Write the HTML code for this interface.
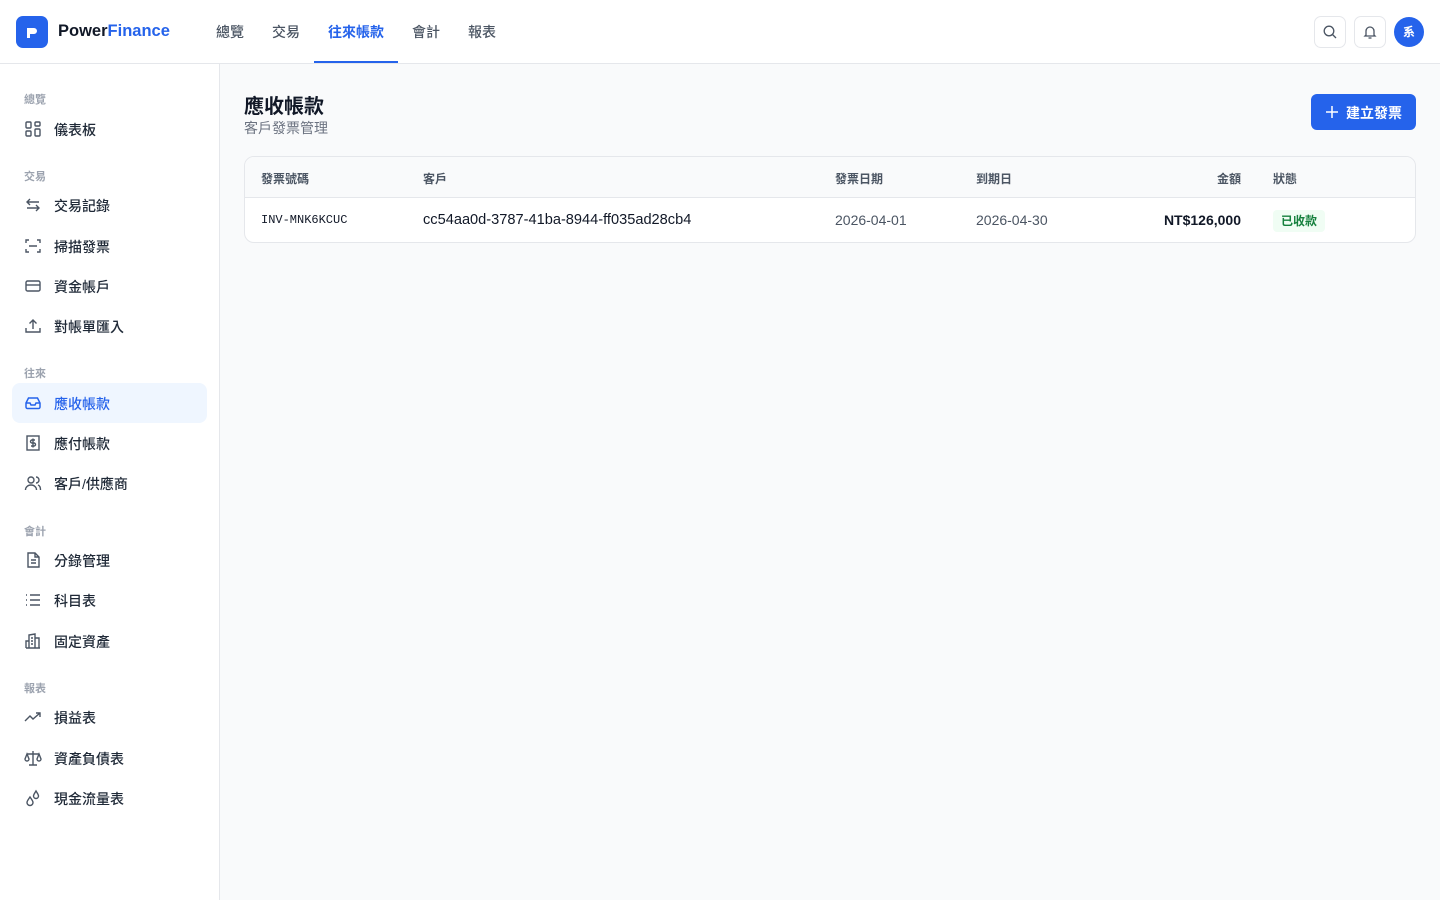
<!DOCTYPE html>
<html><head><meta charset="utf-8"><style>
*{box-sizing:border-box;margin:0;padding:0}
body{width:1440px;height:900px;overflow:hidden;background:#f9fafb;font-family:"Liberation Sans","Noto Sans CJK TC",sans-serif;color:#111827}
.hdr{position:absolute;left:0;top:0;width:1440px;height:64px;background:#fff;border-bottom:1px solid #e5e7eb}
.logo{position:absolute;left:16px;top:16px;width:32px;height:32px;background:#2563eb;border-radius:7px}
.brand{position:absolute;left:58px;top:22px;font-size:16.5px;font-weight:700;color:#111827}
.brand span{color:#2563eb}
.tab{position:absolute;top:22px;font-size:14px;color:#4b5563;font-weight:500}
.tab.act{color:#2563eb;font-weight:700}
.uline{position:absolute;left:314px;top:61px;width:84px;height:2px;background:#2563eb}
.ib{position:absolute;top:16px;width:32px;height:32px;border:1px solid #e5e7eb;border-radius:7px;background:#fff}
.ib svg{position:absolute;left:7px;top:7px}
.av{position:absolute;left:1394px;top:17px;width:30px;height:30px;border-radius:50%;background:#2563eb;color:#fff;font-size:12px;font-weight:700;text-align:center;line-height:30px}
.side{position:absolute;left:0;top:64px;width:220px;height:836px;background:#fff;border-right:1px solid #e5e7eb}
.lab{position:absolute;left:24px;font-size:11px;font-weight:700;color:#9ca3af}
.it{position:absolute;left:12px;width:195px;height:40px;border-radius:8px;font-size:14px;font-weight:500;color:#1f2937}
.it span{position:absolute;left:42px;top:50%;transform:translateY(-45%)}
.it svg{position:absolute;left:12px;top:11px}
.it.act{background:#eff6ff;color:#2563eb}
h1{position:absolute;left:244px;top:90px;font-size:20px;font-weight:700}
.sub{position:absolute;left:244px;top:118px;font-size:14px;color:#6b7280}
.btn{position:absolute;left:1311px;top:94px;width:105px;height:36px;background:#2563eb;border-radius:6px;color:#fff;font-size:14px;font-weight:700}
.btn span{position:absolute;left:35px;top:9px}
.tbl{position:absolute;left:244px;top:156px;width:1172px;height:87px;background:#fff;border:1px solid #e5e7eb;border-radius:10px;overflow:hidden}
.th{position:absolute;left:0;top:0;width:100%;height:41px;background:#f9fafb;border-bottom:1px solid #e5e7eb}
.c{position:absolute;font-size:12px;font-weight:700;color:#4b5563}
.d{position:absolute;font-size:14px}
</style></head><body>
<div class="hdr">
 <div class="logo"><svg width="32" height="32" viewBox="0 0 32 32"><path d="M11 12 h7 a3 3 0 0 1 0 6 h-4 v4 h-3z" fill="#fff"/></svg></div>
 <div class="brand">Power<span>Finance</span></div>
 <div class="tab" style="left:216px">總覽</div>
 <div class="tab" style="left:272px">交易</div>
 <div class="tab act" style="left:328px">往來帳款</div>
 <div class="tab" style="left:412px">會計</div>
 <div class="tab" style="left:468px">報表</div>
 <div class="uline"></div>
 <div class="ib" style="left:1314px"><svg width="16" height="16" viewBox="0 0 16 16" fill="none" stroke="#4b5563" stroke-width="1.3"><circle cx="7" cy="7" r="4.8"/><path d="M10.5 10.5 14 14"/></svg></div>
 <div class="ib" style="left:1354px"><svg width="16" height="16" viewBox="0 0 16 16" fill="none" stroke="#4b5563" stroke-width="1.3"><path d="M4 11V7a4 4 0 0 1 8 0v4l1 1H3z"/><path d="M6.5 14h3"/></svg></div>
 <div class="av">系</div>
</div>
<div class="side">
 <div class="lab" style="top:27px">總覽</div>
 <div class="it" style="top:45px"><svg width="18" height="18" viewBox="0 0 18 18" fill="none" stroke="#4b5563" stroke-width="1.4"><rect x="2" y="2" width="5" height="6" rx="1"/><rect x="11" y="2" width="5" height="4" rx="1"/><rect x="2" y="11" width="5" height="5" rx="1"/><rect x="11" y="9" width="5" height="7" rx="1"/></svg><span>儀表板</span></div>
 <div class="lab" style="top:104px">交易</div>
 <div class="it" style="top:121px"><svg width="18" height="18" viewBox="0 0 18 18" fill="none" stroke="#4b5563" stroke-width="1.4"><path d="M3 6h12M6 3 3 6l3 3M15 12H3m9-3 3 3-3 3"/></svg><span>交易記錄</span></div>
 <div class="it" style="top:162px"><svg width="18" height="18" viewBox="0 0 18 18" fill="none" stroke="#4b5563" stroke-width="1.4"><path d="M2 6V3h3M13 3h3v3M16 12v3h-3M5 15H2v-3M5 9h8"/></svg><span>掃描發票</span></div>
 <div class="it" style="top:202px"><svg width="18" height="18" viewBox="0 0 18 18" fill="none" stroke="#4b5563" stroke-width="1.4"><rect x="2" y="4" width="14" height="10" rx="1.5"/><path d="M2 8h14"/></svg><span>資金帳戶</span></div>
 <div class="it" style="top:242px"><svg width="18" height="18" viewBox="0 0 18 18" fill="none" stroke="#4b5563" stroke-width="1.4"><path d="M2 11v4h14v-4M9 12V3M5.5 6.5 9 3l3.5 3.5"/></svg><span>對帳單匯入</span></div>
 <div class="lab" style="top:301px">往來</div>
 <div class="it act" style="top:319px"><svg width="18" height="18" viewBox="0 0 18 18" fill="none" stroke="#2563eb" stroke-width="1.5"><path d="M2 9l2.5-5h9L16 9v4a1.5 1.5 0 0 1-1.5 1.5h-11A1.5 1.5 0 0 1 2 13z"/><path d="M2 9h4l1 2h4l1-2h4"/></svg><span>應收帳款</span></div>
 <div class="it" style="top:359px"><svg width="18" height="18" viewBox="0 0 18 18" fill="none" stroke="#4b5563" stroke-width="1.4"><rect x="3" y="2" width="12" height="14"/><path d="M11 6H8a1.5 1.5 0 0 0 0 3h2a1.5 1.5 0 0 1 0 3H7M9 4.5v9"/></svg><span>應付帳款</span></div>
 <div class="it" style="top:399px"><svg width="18" height="18" viewBox="0 0 18 18" fill="none" stroke="#4b5563" stroke-width="1.4"><circle cx="7" cy="6" r="3"/><path d="M1.5 16c0-3 2.5-5 5.5-5s5.5 2 5.5 5M12 3a3 3 0 0 1 0 6M14 11c1.5.5 2.5 2.5 2.5 5"/></svg><span>客戶/供應商</span></div>
 <div class="lab" style="top:459px">會計</div>
 <div class="it" style="top:476px"><svg width="18" height="18" viewBox="0 0 18 18" fill="none" stroke="#4b5563" stroke-width="1.4"><path d="M4 2h7l4 4v10H4z"/><path d="M11 2v4h4M7 9h5M7 12h5"/></svg><span>分錄管理</span></div>
 <div class="it" style="top:516px"><svg width="18" height="18" viewBox="0 0 18 18" fill="none" stroke="#4b5563" stroke-width="1.4"><path d="M6 4h10M6 9h10M6 14h10M2 4h1M2 9h1M2 14h1"/></svg><span>科目表</span></div>
 <div class="it" style="top:557px"><svg width="18" height="18" viewBox="0 0 18 18" fill="none" stroke="#4b5563" stroke-width="1.4"><path d="M5 16V3l6-1v14M11 6h4v10M2 16h14M2 16V9h3M7 6h2M7 9h2M7 12h2"/></svg><span>固定資產</span></div>
 <div class="lab" style="top:616px">報表</div>
 <div class="it" style="top:633px"><svg width="18" height="18" viewBox="0 0 18 18" fill="none" stroke="#4b5563" stroke-width="1.4"><path d="M1 13l5-5 3 3 7-6M12 5h4v4"/></svg><span>損益表</span></div>
 <div class="it" style="top:674px"><svg width="18" height="18" viewBox="0 0 18 18" fill="none" stroke="#4b5563" stroke-width="1.4"><path d="M9 2v14M5 16h8M3 5h12M3 5l-2 5a2 2 0 0 0 4 0zM15 5l-2 5a2 2 0 0 0 4 0z"/></svg><span>資產負債表</span></div>
 <div class="it" style="top:714px"><svg width="18" height="18" viewBox="0 0 18 18" fill="none" stroke="#4b5563" stroke-width="1.4"><path d="M6 8c-2 3-3 4-3 5.5a3 3 0 0 0 6 0C9 12 8 11 6 8zM12 2c-1.5 2.5-2.5 3.5-2.5 5a2.5 2.5 0 0 0 5 0c0-1.5-1-2.5-2.5-5z"/></svg><span>現金流量表</span></div>
</div>
<h1>應收帳款</h1>
<div class="sub">客戶發票管理</div>
<div class="btn"><svg width="14" height="14" viewBox="0 0 14 14" style="position:absolute;left:14px;top:11px" stroke="#fff" stroke-width="1.5"><path d="M7 1v12M1 7h12"/></svg><span>建立發票</span></div>
<div class="tbl">
 <div class="th"></div>
 <div class="c" style="left:16px;top:13px">發票號碼</div>
 <div class="c" style="left:178px;top:13px">客戶</div>
 <div class="c" style="left:590px;top:13px">發票日期</div>
 <div class="c" style="left:731px;top:13px">到期日</div>
 <div class="c" style="left:940px;width:56px;text-align:right;top:13px">金額</div>
 <div class="c" style="left:1028px;top:13px">狀態</div>
 <div class="d" style="left:16px;top:56px;font-family:'Liberation Mono',monospace;font-size:12px">INV-MNK6KCUC</div>
 <div class="d" style="left:178px;top:55px;font-weight:500;font-size:14.6px">cc54aa0d-3787-41ba-8944-ff035ad28cb4</div>
 <div class="d" style="left:590px;top:55px;color:#4b5563">2026-04-01</div>
 <div class="d" style="left:731px;top:55px;color:#4b5563">2026-04-30</div>
 <div class="d" style="left:850px;width:146px;text-align:right;top:55px;font-weight:700">NT$126,000</div>
 <div style="position:absolute;left:1028px;top:53px;width:52px;height:22px;background:#f0fdf4;border-radius:4px;color:#15803d;font-size:12px;font-weight:700;text-align:center;line-height:22px">已收款</div>
</div>
</body></html>
